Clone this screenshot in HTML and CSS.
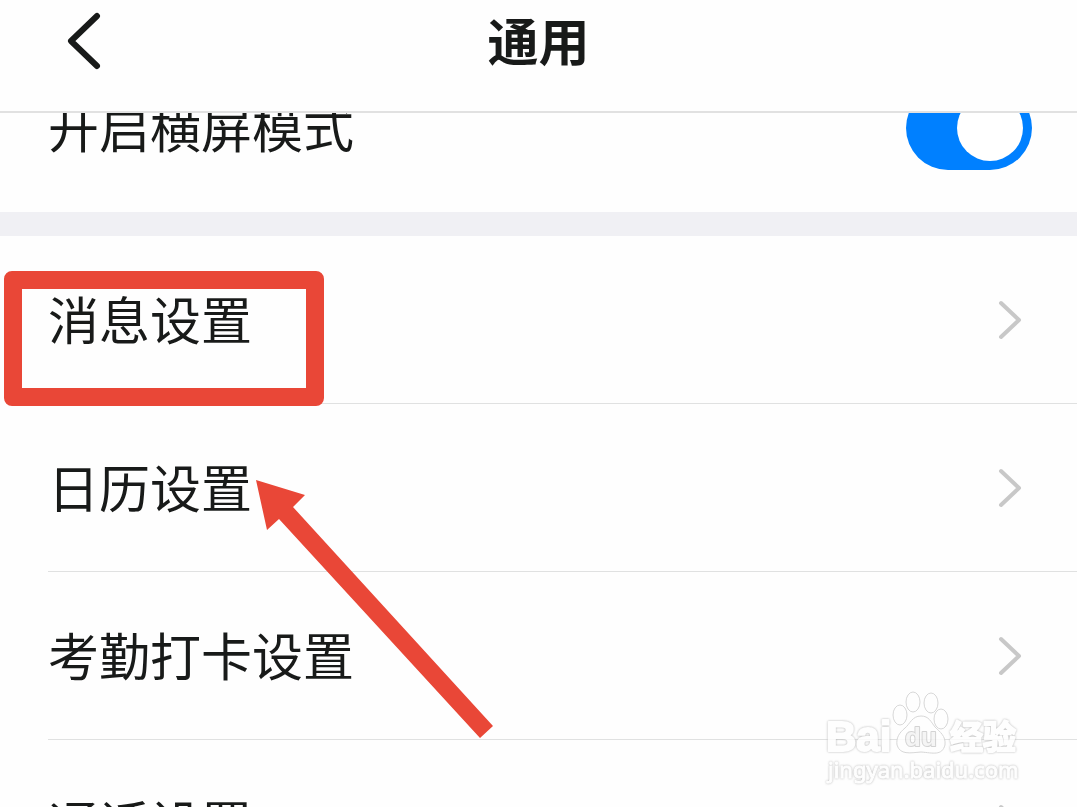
FILE: index.html
```
<!DOCTYPE html>
<html lang="zh-CN">
<head>
	<meta charset="UTF-8">
	<meta name="viewport" content="width=device-width, initial-scale=1">
	<title>通用</title>
	<link rel="stylesheet" href="styles.css">
</head>
<body>
	<header class="header">
		<button class="back" type="button" aria-label="返回">
			<svg width="34" height="58" viewBox="0 0 34 58"><path d="M30 4L4 29L30 54"/></svg>
		</button>
		<h1>通用</h1>
	</header>
	<main class="content">
		<div class="group group_first">
			<div class="row">
				<label for="landscape">开启横屏模式</label>
				<input class="switch" type="checkbox" id="landscape" checked>
			</div>
		</div>
		<ul class="group">
			<li>
				<a class="row" href="#message">
					<span>消息设置</span>
					<svg class="arrow" width="24" height="40" viewBox="0 0 24 40"><path d="M3 3L21 20L3 37"/></svg>
				</a>
				<div class="mark_box"></div>
			</li>
			<li>
				<a class="row" href="#calendar">
					<span>日历设置</span>
					<svg class="arrow" width="24" height="40" viewBox="0 0 24 40"><path d="M3 3L21 20L3 37"/></svg>
				</a>
				<svg class="mark_arrow" width="238" height="259" viewBox="0 0 238 259"><path d="M0 0L49 15L37 27L237 246L224 258L23 39L11 50Z"/></svg>
			</li>
			<li>
				<a class="row" href="#attendance">
					<span>考勤打卡设置</span>
					<svg class="arrow" width="24" height="40" viewBox="0 0 24 40"><path d="M3 3L21 20L3 37"/></svg>
				</a>
			</li>
			<li>
				<a class="row" href="#call">
					<span>通话设置</span>
					<svg class="arrow" width="24" height="40" viewBox="0 0 24 40"><path d="M3 3L21 20L3 37"/></svg>
				</a>
			</li>
		</ul>
	</main>
	<svg class="watermark" width="200" height="96" viewBox="0 0 200 96">
		<g class="paw">
			<ellipse cx="79" cy="24" rx="7" ry="10"/>
			<ellipse cx="92" cy="11" rx="7" ry="10"/>
			<ellipse cx="110" cy="12" rx="7" ry="10"/>
			<ellipse cx="120" cy="28" rx="7" ry="10"/>
			<path d="M100 25C91 25 89 33 84 37C78 42 75 47 76 54C79 64 89 62 100 61C112 62 121 65 124 54C125 45 119 41 114 36C110 31 108 25 100 25Z"/>
		</g>
		<text class="logo" x="5" y="60">Bai</text>
		<text class="logo_du" x="84" y="55">du</text>
		<text class="logo_cn" x="129" y="58">经验</text>
		<text class="site" x="7" y="87">jingyan.baidu.com</text>
	</svg>
</body>
</html>
```

FILE: styles.css
```
*{
	margin:0;
	padding:0;
	box-sizing:border-box;
	list-style:none;
}
body{
	display:flex;
	flex-direction:column;
	height:100vh;
	position:relative;
	overflow:hidden;
	background:#fefefe;
	color:#181a19;
	font-family:"Noto Sans CJK SC",sans-serif;
}
a{
	color:inherit;
	text-decoration:none;
}
svg{
	display:block;
	fill:none;
}
.header{
	display:grid;
	grid-template-columns:1fr auto 1fr;
	align-items:center;
	flex:none;
	padding:5px 67px 34px;
	border-bottom:2px solid #e1e1e1;
}
.header h1{
	padding-bottom:4px;
	font-size:51px;
	line-height:68px;
	font-weight:700;
}
.back{
	justify-self:start;
	border:0;
	background:none;
	cursor:pointer;
}
.back path{
	stroke:#181a19;
	stroke-width:6px;
	stroke-linecap:round;
	stroke-linejoin:round;
}
.content{
	flex:1;
	min-height:0;
	overflow:hidden;
}
/* 列表已向上滚动一段 */
.group_first{
	margin-top:-69px;
	border-bottom:24px solid #f0f0f4;
}
.group li{
	position:relative;
}
.row{
	display:flex;
	align-items:center;
	justify-content:space-between;
	height:168px;
	margin-left:48px;
	padding-right:55px;
	border-bottom:1px solid #e0e1e1;
	font-size:51px;
	line-height:68px;
}
.row span,
.row label{
	padding-bottom:4px;
}
.group_first .row{
	padding-right:45px;
	border-bottom:0;
}
.arrow path{
	stroke:#c8c8c8;
	stroke-width:4px;
	stroke-linecap:round;
	stroke-linejoin:round;
}
.switch{
	appearance:none;
	display:flex;
	align-items:center;
	width:126px;
	height:84px;
	padding:0 9px;
	border-radius:42px;
	background:#ccc;
	cursor:pointer;
}
.switch::before{
	content:"";
	width:66px;
	height:66px;
	border-radius:50%;
	background:#fff;
}
.switch:checked{
	justify-content:flex-end;
	background:#0080ff;
}
/* 红色标注 */
.mark_box{
	position:absolute;
	left:4px;
	top:35px;
	width:320px;
	height:135px;
	z-index:1;
	border:18px solid #e94737;
	border-radius:8px;
	pointer-events:none;
}
.mark_arrow{
	position:absolute;
	left:256px;
	top:76px;
	z-index:1;
	fill:#e94737;
	pointer-events:none;
}
/* 水印 */
.watermark{
	position:absolute;
	right:56px;
	bottom:20px;
	overflow:visible;
	fill:#fefefe;
	stroke:#d0d0d0;
	stroke-width:1px;
	opacity:0.85;
	pointer-events:none;
}
.watermark text{
	paint-order:stroke;
	stroke:#fefefe;
	stroke-width:2px;
	stroke-linejoin:round;
	filter:drop-shadow(0 0 1px #aaa);
}
.watermark .logo{
	font:bold 42px "Liberation Sans",sans-serif;
}
.watermark .logo_du{
	font:bold 26px "Liberation Sans",sans-serif;
	fill:#f4f4f4;
	stroke:#ccc;
	filter:none;
}
.watermark .logo_cn{
	font:bold 33px "Noto Sans CJK SC",sans-serif;
}
.watermark .site{
	font:22px "Noto Sans",sans-serif;
	stroke-width:1px;
}
```
